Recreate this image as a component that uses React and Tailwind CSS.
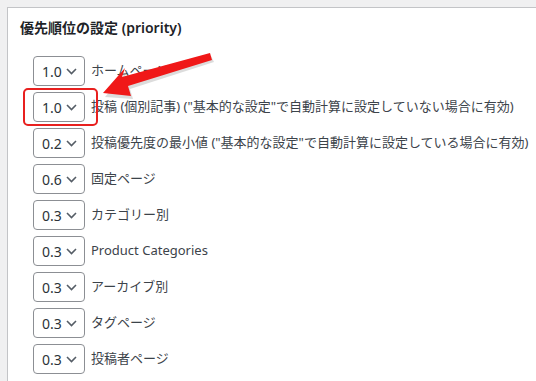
import React from 'react';

const rows = [
  { value: '1.0', label: 'ホームページ' },
  { value: '1.0', label: '投稿 (個別記事) ("基本的な設定"で自動計算に設定していない場合に有効)' },
  { value: '0.2', label: '投稿優先度の最小値 ("基本的な設定"で自動計算に設定している場合に有効)' },
  { value: '0.6', label: '固定ページ' },
  { value: '0.3', label: 'カテゴリー別' },
  { value: '0.3', label: 'Product Categories' },
  { value: '0.3', label: 'アーカイブ別' },
  { value: '0.3', label: 'タグページ' },
  { value: '0.3', label: '投稿者ページ' },
];

// fake select box, WP admin style
function PrioritySelect({ value }) {
  return (
    <div className="flex h-[30px] w-[52px] shrink-0 items-center justify-between rounded-[4px] border border-[#8c8f94] bg-white pl-[8px] pr-[7px] text-[14px] text-[#2c3338]">
      <span>{value}</span>
      <svg width="11" height="7" viewBox="0 0 11 7" className="mt-[1px]">
        <path d="M1 1l4.5 4.5L10 1" fill="none" stroke="#555d66" strokeWidth="1.6" />
      </svg>
    </div>
  );
}

export default function App() {
  return (
    <div
      className="relative h-[381px] w-[536px] overflow-hidden bg-[#f0f0f1] pl-[7px] pt-[7px]"
      style={{ fontFamily: '"Noto Sans", "Noto Sans CJK JP", sans-serif' }}
    >
      <div className="h-full border-l border-t border-[#c3c4c7] bg-white pl-[12px] pt-[10px]">
        <h2 className="text-[14px] font-semibold leading-[20px] text-[#1d2327]">
          優先順位の設定 (priority)
        </h2>
        <div className="mt-[18px] flex flex-col gap-[6px] pl-[13px]">
          {rows.map((r, i) => (
            <div key={i} className="flex items-center gap-[6px]">
              <PrioritySelect value={r.value} />
              <span className="whitespace-nowrap text-[13px] text-[#3c434a]">{r.label}</span>
            </div>
          ))}
        </div>
      </div>

      {/* red highlight around second select */}
      <div className="absolute left-[23px] top-[88px] h-[38px] w-[75px] rounded-[5px] border-2 border-[#e8201f]" />

      {/* annotation arrow */}
      <svg className="absolute left-0 top-0" width="536" height="381" viewBox="0 0 536 381">
        <path
          d="M104 95 L126 69 L123 78 L210 54 L213 60 L129 87 L132 97 Z"
          fill="#9a9a9a"
          opacity="0.35"
          transform="translate(1 2)"
        />
        <path d="M103 93 L125 68 L122 77 L210 53 L212 60 L128 86 L131 96 Z" fill="#f01818" />
      </svg>
    </div>
  );
}
